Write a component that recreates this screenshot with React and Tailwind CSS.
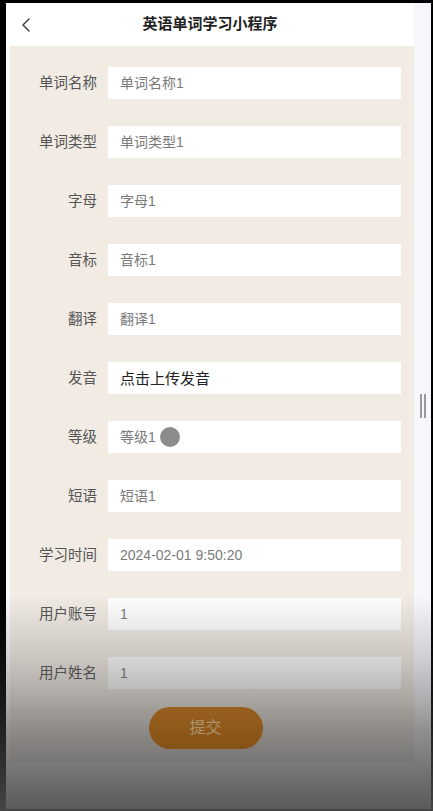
import { ChevronLeft } from 'lucide-react';

const FONT = { fontFamily: '"Liberation Sans", "Noto Sans CJK SC", sans-serif' };

const FIELDS = [
  { label: '单词名称', value: '单词名称1' },
  { label: '单词类型', value: '单词类型1' },
  { label: '字母', value: '字母1' },
  { label: '音标', value: '音标1' },
  { label: '翻译', value: '翻译1' },
  { label: '发音', value: '点击上传发音', strong: true },
  { label: '等级', value: '等级1' },
  { label: '短语', value: '短语1' },
  { label: '学习时间', value: '2024-02-01 9:50:20' },
  { label: '用户账号', value: '1' },
  { label: '用户姓名', value: '1' },
];

const FormRow = ({ label, value, strong }) => (
  <div className="flex items-center h-[32px]">
    <div className="w-[87px] text-right text-[14.5px] text-[#555] leading-none">{label}</div>
    <div className="ml-[11px] flex-1 h-full bg-white flex items-center pl-[12px]">
      <span
        className={
          strong
            ? 'text-[15px] text-[#222] leading-none'
            : 'text-[14px] text-[#7a7a7a] leading-none'
        }
      >
        {value}
      </span>
    </div>
  </div>
);

export default function App() {
  return (
    <div
      className="relative w-[433px] h-[811px] overflow-hidden bg-black pt-[3px] pl-[6px] pr-[2px] pb-[2px]"
      style={FONT}
    >
      <div className="flex h-full">
        {/* page */}
        <div className="w-[408px] h-full flex flex-col bg-[#fafafa]">
          {/* header */}
          <div className="relative h-[43px] bg-white flex items-center justify-center">
            <ChevronLeft
              className="absolute left-[8px] top-[10px] text-[#444]"
              size={24}
              strokeWidth={1.5}
            />
            <span className="text-[15px] font-bold text-[#222]">英语单词学习小程序</span>
          </div>

          {/* form */}
          <div className="ml-[4px] bg-[#f1ebe4] pt-[21px] pr-[13px] pb-[13px] flex flex-col">
            <div className="flex flex-col gap-[27px]">
              {FIELDS.map(f => (
                <FormRow key={f.label} {...f} />
              ))}
            </div>
            <div className="relative z-20 mt-[18px] flex justify-center">
              <button className="w-[114px] h-[42px] rounded-full bg-[linear-gradient(to_bottom,#98601f,#855215)] text-[16px] text-[#ad9270]">
                提交
              </button>
            </div>
          </div>
        </div>

        {/* right strip with scroll handle */}
        <div className="flex-1 h-full bg-[#f6f7fb] flex items-center justify-center gap-[2px]">
          <div className="w-[2px] h-[24px] bg-[#9a9a9a]" />
          <div className="w-[2px] h-[24px] bg-[#9a9a9a]" />
        </div>
      </div>

      {/* touch indicator */}
      <div className="absolute left-[160px] top-[427px] w-[20px] h-[20px] rounded-full bg-[#8c8c8c]" />

      {/* recording shade */}
      <div className="pointer-events-none absolute z-10 left-0 right-0 top-[595px] bottom-0 bg-[linear-gradient(to_bottom,rgba(60,60,60,0)_0%,rgba(60,60,60,0.22)_30%,rgba(60,60,60,0.4)_49%,rgba(60,60,60,0.55)_62%,rgba(75,75,75,0.92)_100%)]" />
    </div>
  );
}
